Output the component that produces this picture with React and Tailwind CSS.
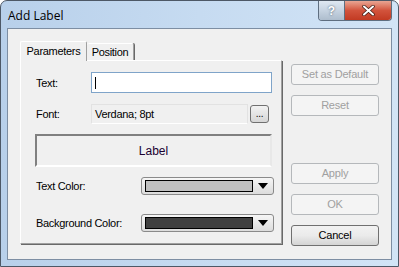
import React from 'react';

const ui = { fontFamily: '"Liberation Sans", Arial, sans-serif' };

const SideButton = ({ label, enabled = false, className = '' }) => (
  <div
    className={`w-[88px] h-[21px] flex items-center justify-center rounded-[3px] border text-[11px] tracking-[-0.2px] ${
      enabled
        ? 'border-[#707070] bg-gradient-to-b from-[#f2f2f2] via-[#ebebeb] to-[#d4d4d4] text-black'
        : 'border-[#b5b8bb] bg-[#f4f4f4] text-[#a0a0a0]'
    } ${className}`}
  >
    {label}
  </div>
);

const ColorPick = ({ swatch }) => (
  <div className="w-[133px] h-[18px] rounded-[3px] border border-[#8a8a8a] bg-gradient-to-b from-[#f6f6f6] to-[#dcdcdc] flex items-center pl-[3px] pr-[4px]">
    <div className={`flex-1 h-[12px] border border-black ${swatch}`} />
    <svg width="11" height="7" viewBox="0 0 11 7" className="ml-[5px]">
      <path d="M0 0 H10 L5 6 Z" fill="#000" />
    </svg>
  </div>
);

export default function App() {
  return (
    <div
      className="w-[399px] h-[267px] rounded-t-[7px] border border-[#4d5866] bg-gradient-to-r from-[#b8d0ea] via-[#c6dbf1] to-[#d2e4f6] flex flex-col overflow-hidden"
      style={ui}
    >
      {/* Title bar */}
      <div className="h-[27px] flex items-start relative">
        <span className="pl-[7px] pt-[6px] text-[12px] text-black" style={{ fontFamily: '"Open Sans", "Liberation Sans", sans-serif' }}>
          Add Label
        </span>
        <div className="ml-auto mr-[6px] flex border border-t-0 border-[#5e6e80] rounded-b-[4px] overflow-hidden">
          <div className="w-[26px] h-[19px] bg-gradient-to-b from-[#dfe8f2] via-[#c6d3e1] to-[#aebdcd] flex items-center justify-center text-white text-[12px] font-bold border-r border-[#5e6e80]" style={{ textShadow: '0 0 2px #3a4a5c' }}>
            ?
          </div>
          <div className="w-[46px] h-[19px] bg-gradient-to-b from-[#e8a593] via-[#d2533c] to-[#c23a22] flex items-center justify-center">
            <svg width="13" height="11" viewBox="0 0 13 11">
              <path d="M2 1.5 L11 9.5 M11 1.5 L2 9.5" stroke="#3a1a12" strokeWidth="3.4" strokeLinecap="round" />
              <path d="M2 1.5 L11 9.5 M11 1.5 L2 9.5" stroke="#fff" strokeWidth="2" strokeLinecap="round" />
            </svg>
          </div>
        </div>
      </div>

      {/* Client area */}
      <div className="mx-[6px] h-[232px] border border-[#7d8ea3] bg-[#f0f0f0] flex pl-[12px] pt-[12px]">
        {/* Tabs + panel */}
        <div className="flex flex-col">
          <div className="flex items-end h-[19px] text-[11px] tracking-[-0.3px]">
            <div className="h-[20px] w-[67px] border-l border-t border-r border-white border-r-[#a0a0a0] rounded-t-[2px] bg-[#f0f0f0] flex items-center justify-center relative top-[1px] z-10">
              Parameters
            </div>
            <div className="h-[17px] w-[47px] border-t border-r border-white border-r-[#a0a0a0] rounded-t-[2px] bg-[#f0f0f0] flex items-center justify-center shadow-[1px_0_0_#696969]">
              Position
            </div>
          </div>
          <div className="w-[262px] h-[184px] border border-white border-r-[#a0a0a0] border-b-[#a0a0a0] shadow-[1px_1px_0_#696969] flex flex-col pl-[14px] text-[11px] tracking-[-0.3px] text-black">
            <div className="mt-[11px] flex items-start">
              <span className="w-[56px] pl-[1px] pt-[3px]">Text:</span>
              <div className="w-[181px] h-[21px] border border-[#7fa4c9] bg-white flex items-center pl-[3px]">
                <div className="w-[1px] h-[12px] bg-black" />
              </div>
            </div>
            <div className="mt-[11px] flex items-start">
              <span className="w-[56px] pl-[1px] pt-[2px]">Font:</span>
              <div className="w-[157px] h-[20px] border border-[#e2e2e2] border-b-white bg-[#f0f0f0] flex items-center pl-[3px]">
                Verdana; 8pt
              </div>
              <div className="ml-[2px] mt-[1px] w-[19px] h-[18px] rounded-[3px] border border-[#707070] bg-gradient-to-b from-[#f2f2f2] to-[#d6d6d6] flex items-end justify-center pb-[3px] text-[10px] leading-none">
                ...
              </div>
            </div>
            <div className="mt-[10px] w-[237px] h-[33px] border-2 border-[#808080] border-r-[#e8e8e8] border-b-[#ffffff] flex items-center justify-center text-[12px] tracking-normal text-[#1a0030]">
              Label
            </div>
            <div className="mt-[10px] flex items-start">
              <span className="w-[106px] pl-[1px] pt-[1px]">Text Color:</span>
              <ColorPick swatch="bg-[#c0c0c0]" />
            </div>
            <div className="mt-[19px] flex items-start">
              <span className="w-[106px] pl-[1px] pt-[1px]">Background Color:</span>
              <ColorPick swatch="bg-[#404040]" />
            </div>
          </div>
        </div>

        {/* Buttons */}
        <div className="ml-[9px] pt-[23px] flex flex-col">
          <SideButton label="Set as Default" />
          <SideButton label="Reset" className="mt-[10px]" />
          <SideButton label="Apply" className="mt-[47px]" />
          <SideButton label="OK" className="mt-[10px]" />
          <SideButton label="Cancel" enabled className="mt-[10px]" />
        </div>
      </div>
    </div>
  );
}
